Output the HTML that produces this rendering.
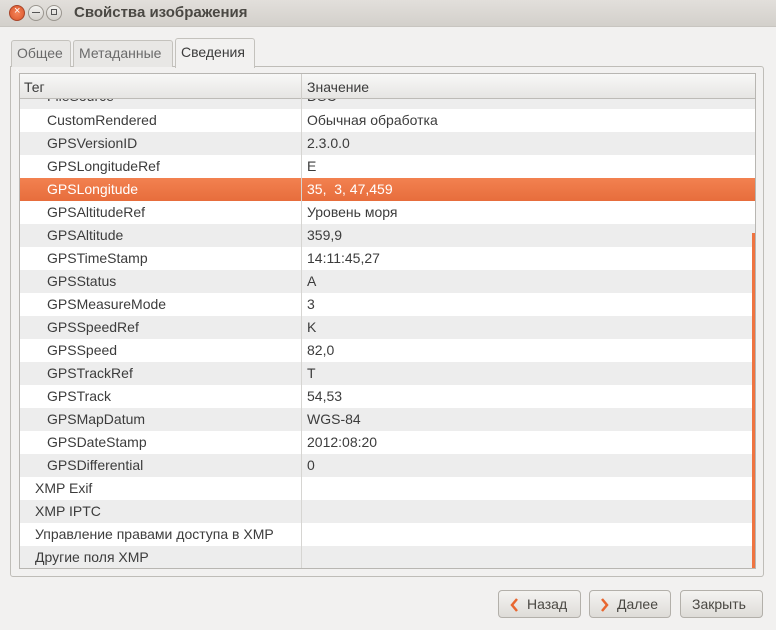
<!DOCTYPE html>
<html><head><meta charset="utf-8"><style>
*{margin:0;padding:0;box-sizing:border-box}
body{width:776px;height:630px;background:#f2f1f0;font-family:"Liberation Sans","DejaVu Sans",sans-serif;font-size:14px;color:#3c3c3c;position:relative;overflow:hidden}
.title{position:absolute;left:0;top:0;width:776px;height:27px;background:linear-gradient(#e2dfdb,#d3d0cb);border-bottom:1px solid #c8c5c0}
.title span{position:absolute;left:74px;top:4px;font-weight:bold;font-size:15px;color:#4a4843}
.wb{position:absolute;top:5px;width:16px;height:16px;border-radius:50%;border:1px solid #9a968f;background:linear-gradient(#f4f3f1,#d4d1cc)}
.tab{position:absolute;top:40px;height:27px;border:1px solid #c4c2bd;border-bottom:none;border-radius:3px 3px 0 0;background:#e8e7e5;color:#6a6a6a;padding:4px 5px 0;font-size:14px}
.frame{position:absolute;left:10px;top:66px;width:754px;height:511px;border:1px solid #bfbdb8;border-radius:0 3px 3px 3px;background:#f2f1f0}
.tbl{position:absolute;left:19px;top:73px;width:737px;height:496px;border:1px solid #b8b6b2;background:#fff;overflow:hidden}
.hdr{position:absolute;left:0;top:0;width:737px;height:25px;background:linear-gradient(#f8f8f7,#e6e5e3);border-bottom:1px solid #bdbbb7}
.hdr span{position:absolute;top:5px}
.row{position:absolute;left:0;width:736px;height:23px}
.row span{position:absolute;top:3px;white-space:nowrap}
.g{background:#ededed}
.sel{background:linear-gradient(#f28150,#e76d3c);color:#fff}
.div{position:absolute;left:281px;top:0;width:1px;height:496px;background:#d6d5d2}
.sb{position:absolute;left:732px;top:159px;width:3px;height:336px;background:#ef7441}
.btn{position:absolute;top:590px;height:28px;border:1px solid #b3b0aa;border-radius:4px;background:linear-gradient(#f4f3f1,#dedcd8);color:#4a4843;font-size:14px}
.btn span{position:absolute;top:5px}
.btn svg{position:absolute;top:7px}
</style></head><body>
<div class="title">
<div class="wb" style="left:9px;background:radial-gradient(#f5855a,#d9542a);border-color:#a8452a"></div>
<div style="position:absolute;left:14px;top:5px;color:#fff;font-size:11px">×</div>
<div class="wb" style="left:28px"></div><div style="position:absolute;left:32px;top:12px;width:8px;height:1px;background:#555"></div>
<div class="wb" style="left:46px"></div><div style="position:absolute;left:51px;top:9px;width:6px;height:6px;border:1px solid #555"></div>
<span>Свойства изображения</span></div>
<div class="frame"></div>
<div class="tab" style="left:11px;width:60px">Общее</div>
<div class="tab" style="left:73px;width:100px">Метаданные</div>
<div class="tab" style="left:175px;width:80px;top:38px;height:30px;background:#f2f1f0;color:#3c3c3c;padding-top:5px">Сведения</div>
<div class="tbl">
<div class="row g" style="top:25px;height:10px"><span style="left:27px;top:-11px">FileSource</span><span style="left:287px;top:-11px">DSC</span></div>
<div class="row" style="top:35px"><span style="left:27px">CustomRendered</span><span style="left:287px">Обычная обработка</span></div>
<div class="row g" style="top:58px"><span style="left:27px">GPSVersionID</span><span style="left:287px">2.3.0.0</span></div>
<div class="row" style="top:81px"><span style="left:27px">GPSLongitudeRef</span><span style="left:287px">E</span></div>
<div class="row sel" style="top:104px"><span style="left:27px">GPSLongitude</span><span style="left:287px">35,&nbsp; 3, 47,459</span></div>
<div class="row" style="top:127px"><span style="left:27px">GPSAltitudeRef</span><span style="left:287px">Уровень моря</span></div>
<div class="row g" style="top:150px"><span style="left:27px">GPSAltitude</span><span style="left:287px">359,9</span></div>
<div class="row" style="top:173px"><span style="left:27px">GPSTimeStamp</span><span style="left:287px">14:11:45,27</span></div>
<div class="row g" style="top:196px"><span style="left:27px">GPSStatus</span><span style="left:287px">A</span></div>
<div class="row" style="top:219px"><span style="left:27px">GPSMeasureMode</span><span style="left:287px">3</span></div>
<div class="row g" style="top:242px"><span style="left:27px">GPSSpeedRef</span><span style="left:287px">K</span></div>
<div class="row" style="top:265px"><span style="left:27px">GPSSpeed</span><span style="left:287px">82,0</span></div>
<div class="row g" style="top:288px"><span style="left:27px">GPSTrackRef</span><span style="left:287px">T</span></div>
<div class="row" style="top:311px"><span style="left:27px">GPSTrack</span><span style="left:287px">54,53</span></div>
<div class="row g" style="top:334px"><span style="left:27px">GPSMapDatum</span><span style="left:287px">WGS-84</span></div>
<div class="row" style="top:357px"><span style="left:27px">GPSDateStamp</span><span style="left:287px">2012:08:20</span></div>
<div class="row g" style="top:380px"><span style="left:27px">GPSDifferential</span><span style="left:287px">0</span></div>
<div class="row" style="top:403px"><span style="left:15px">XMP Exif</span></div>
<div class="row g" style="top:426px"><span style="left:15px">XMP IPTC</span></div>
<div class="row" style="top:449px"><span style="left:15px">Управление правами доступа в XMP</span></div>
<div class="row g" style="top:472px"><span style="left:15px">Другие поля XMP</span></div>
<div class="div"></div>
<div class="hdr"><span style="left:4px">Тег</span><span style="left:287px">Значение</span><div style="position:absolute;left:281px;top:0;width:1px;height:25px;background:#cfcdc9"></div></div>
<div class="sb"></div>
</div>
<div class="btn" style="left:498px;width:83px"><svg style="left:10px" width="10" height="14"><path d="M8 1L3 7L8 13" fill="none" stroke="#e8662f" stroke-width="2.5"/></svg><span style="left:28px">Назад</span></div>
<div class="btn" style="left:589px;width:82px"><svg style="left:10px" width="10" height="14"><path d="M2 1L7 7L2 13" fill="none" stroke="#e8662f" stroke-width="2.5"/></svg><span style="left:27px">Далее</span></div>
<div class="btn" style="left:680px;width:83px"><span style="left:11px">Закрыть</span></div>
</body></html>
